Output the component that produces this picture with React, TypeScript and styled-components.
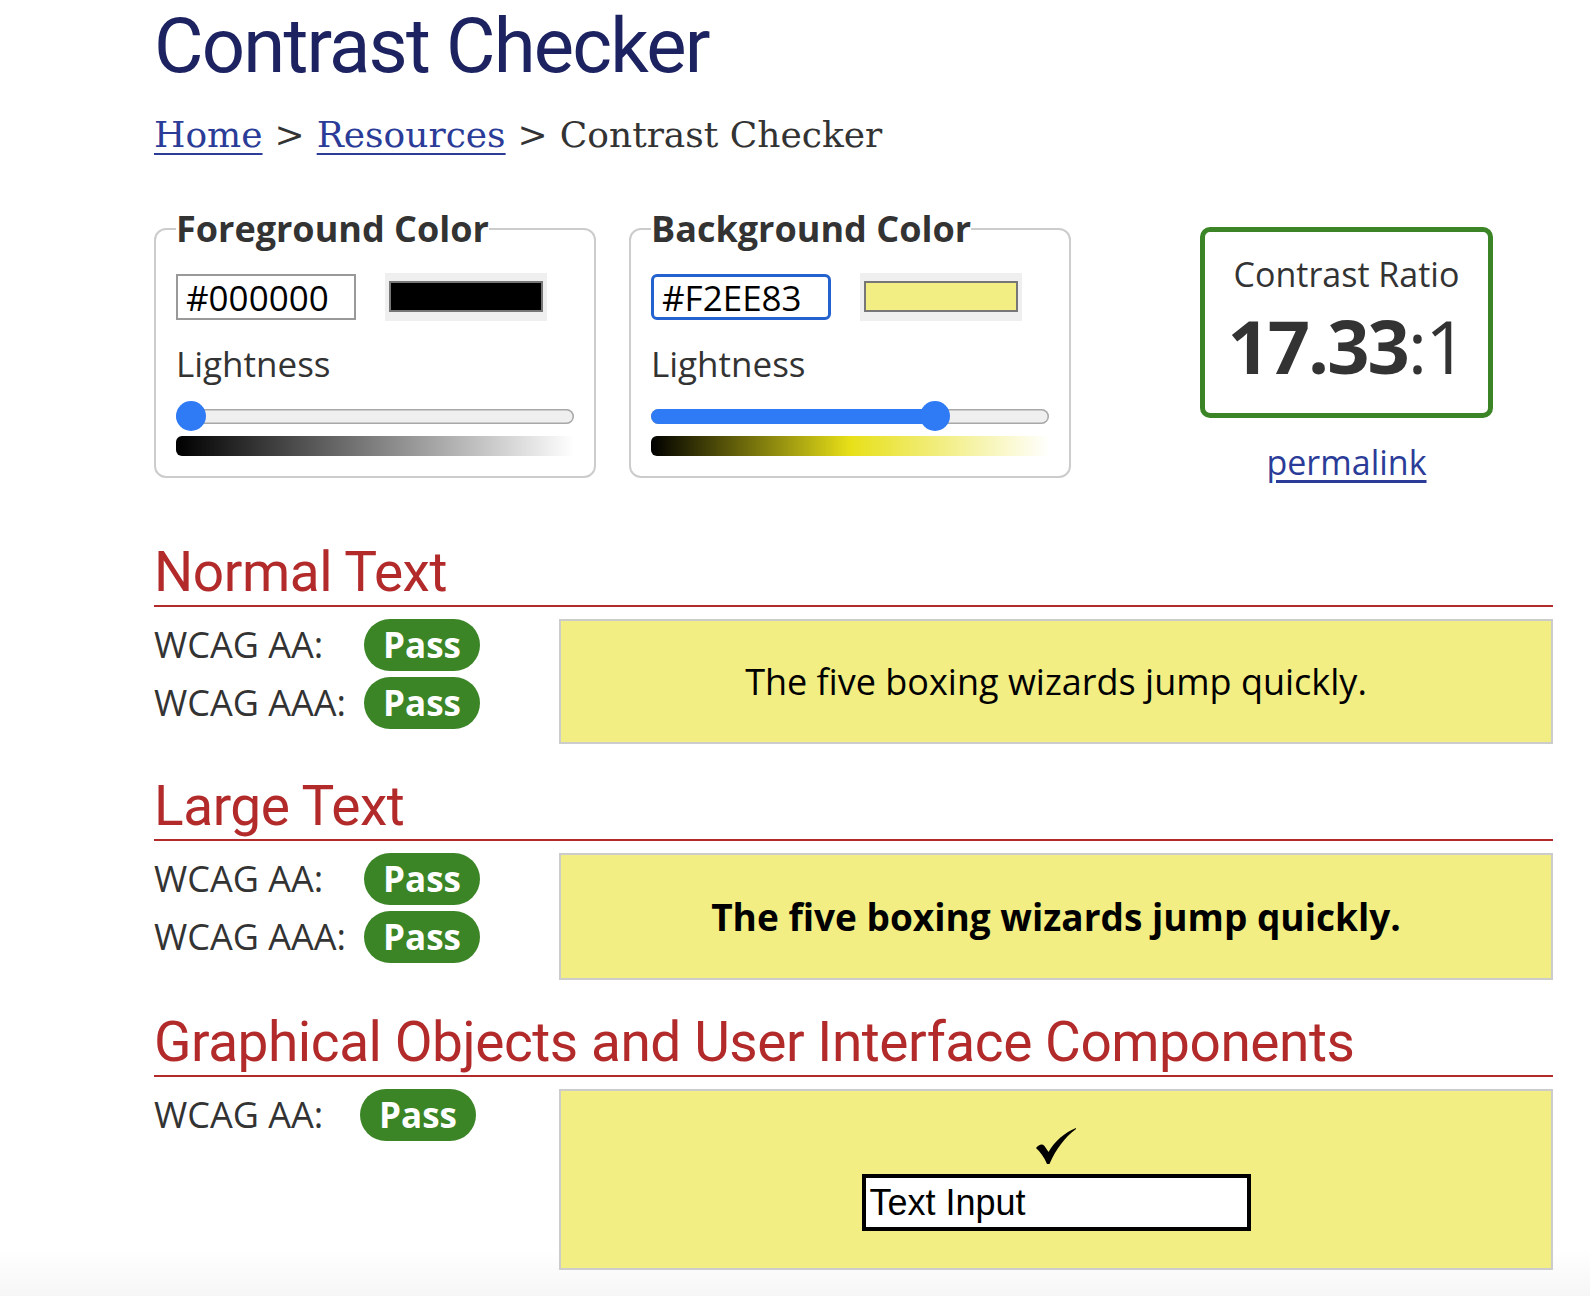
import styled, { createGlobalStyle } from "styled-components";

const GlobalStyle = createGlobalStyle`
  html, body {
    margin: 0;
    padding: 0;
  }
  body {
    min-height: 1296px;
    background: linear-gradient(to bottom, #ffffff 1250px, #f6f6f6 1296px);
    font-family: "Open Sans", "Liberation Sans", sans-serif;
    color: #333;
  }
`;

const colors = {
  navy: "#1c2360",
  link: "#2b3c98",
  red: "#b22a2a",
  green: "#3b8527",
  blue: "#2f7af5",
  sample: "#F2EE83",
  border: "#cccccc",
};

const Page = styled.main`
  width: 1399px;
  padding-left: 154px;
`;

const Title = styled.h1`
  margin: 0;
  padding-top: 8px;
  font-family: Roboto, "Liberation Sans", sans-serif;
  font-weight: 400;
  font-size: 76px;
  line-height: 1;
  letter-spacing: -1.8px;
  color: ${colors.navy};
`;

const Breadcrumb = styled.nav`
  margin-top: 33px;
  font-family: "DejaVu Serif", "Liberation Serif", serif;
  font-size: 36px;
  line-height: 1;
  color: #333;

  a {
    color: ${colors.link};
    text-decoration: underline;
    text-underline-offset: 6px;
    text-decoration-thickness: 2px;
  }
`;

const Sep = styled.span`
  margin: 0 12px;
`;

const TopRow = styled.div`
  display: flex;
  align-items: flex-start;
  margin-top: 54px;
`;

const PickerBox = styled.fieldset`
  box-sizing: border-box;
  width: 442px;
  margin: 0 33px 0 0;
  padding: 22px 20px 20px;
  border: 2px solid ${colors.border};
  border-radius: 12px;
  min-inline-size: auto;
`;

const Legend = styled.legend`
  padding: 0;
  font-weight: 700;
  font-size: 36px;
  line-height: 44px;
  color: #333;
`;

const InputRow = styled.div`
  display: flex;
  align-items: center;
  gap: 29px;
`;

const HexInput = styled.div<{ $focused?: boolean }>`
  box-sizing: border-box;
  width: 180px;
  height: 46px;
  padding: 0 8px;
  display: flex;
  align-items: center;
  font-size: 35px;
  color: #000;
  background: #fff;
  border: ${(p) => (p.$focused ? "3px solid #2462d0" : "2px solid #999")};
  border-radius: ${(p) => (p.$focused ? "6px" : "0")};
`;

const Swatch = styled.div`
  box-sizing: border-box;
  width: 162px;
  height: 48px;
  padding: 8px 4px 9px;
  background: #efefef;
`;

const SwatchColor = styled.div<{ $color: string }>`
  height: 100%;
  box-sizing: border-box;
  border: 2px solid #777;
  background: ${(p) => p.$color};
`;

const FieldLabel = styled.div`
  margin-top: 22px;
  font-size: 35px;
  line-height: 42px;
  color: #333;
`;

const SliderWrap = styled.div`
  position: relative;
  height: 30px;
  margin-top: 16px;
  display: flex;
  align-items: center;
`;

const Rail = styled.div`
  flex: 1;
  height: 15px;
  border-radius: 8px;
  background: #efefef;
  box-shadow: inset 0 0 0 1.5px #a8a8a8;
  overflow: hidden;
`;

const RailFill = styled.div`
  height: 100%;
  background: ${colors.blue};
`;

const Thumb = styled.div`
  position: absolute;
  top: 0;
  width: 30px;
  height: 30px;
  border-radius: 50%;
  background: ${colors.blue};
`;

const GradientBar = styled.div<{ $gradient: string }>`
  height: 20px;
  margin-top: 5px;
  border-radius: 6px 0 0 6px;
  background: ${(p) => p.$gradient};
`;

const RatioColumn = styled.div`
  margin-left: 96px;
  margin-top: 20px;
  display: flex;
  flex-direction: column;
  align-items: center;
`;

const RatioBox = styled.div`
  box-sizing: border-box;
  width: 293px;
  height: 191px;
  padding-top: 22px;
  border: 5px solid ${colors.green};
  border-radius: 10px;
  text-align: center;
`;

const RatioLabel = styled.div`
  font-size: 34px;
  line-height: 40px;
  color: #333;
`;

const RatioValue = styled.div`
  margin-top: 15px;
  font-size: 74px;
  line-height: 1;
  letter-spacing: -2px;
  color: #333;

  b {
    font-weight: 700;
  }
`;

const Permalink = styled.a`
  margin-top: 24px;
  font-size: 34px;
  line-height: 40px;
  color: ${colors.link};
  text-decoration: underline;
  text-underline-offset: 5px;
`;

const Section = styled.section<{ $first?: boolean }>`
  margin-top: ${(p) => (p.$first ? "60px" : "32px")};
`;

const SectionTitle = styled.h2`
  margin: 0;
  padding-bottom: 3px;
  border-bottom: 2px solid ${colors.red};
  font-family: Roboto, "Liberation Sans", sans-serif;
  font-weight: 400;
  font-size: 55px;
  line-height: 60px;
  letter-spacing: -0.45px;
  color: ${colors.red};
`;

const SectionBody = styled.div`
  display: flex;
  align-items: flex-start;
  margin-top: 12px;
`;

const Results = styled.div<{ $labelWidth: number }>`
  width: 405px;
  display: grid;
  grid-template-columns: ${(p) => p.$labelWidth}px auto;
  justify-content: start;
  row-gap: 6px;
`;

const ResultLabel = styled.div`
  font-size: 36px;
  line-height: 52px;
  color: #333;
  white-space: nowrap;
`;

const Pass = styled.div`
  box-sizing: border-box;
  width: 116px;
  height: 52px;
  border-radius: 26px;
  background: ${colors.green};
  color: #fff;
  font-weight: 700;
  font-size: 35px;
  line-height: 52px;
  text-align: center;
`;

const Sample = styled.div<{ $bold?: boolean; $tall?: boolean }>`
  box-sizing: border-box;
  width: 994px;
  padding: ${(p) => (p.$tall ? "37px 0" : "36px 0")};
  display: flex;
  flex-direction: column;
  align-items: center;
  background: ${colors.sample};
  border: 2px solid ${colors.border};
  color: #000;
  font-size: ${(p) => (p.$bold ? "37px" : "36px")};
  font-weight: ${(p) => (p.$bold ? 700 : 400)};
`;

const Check = styled.svg`
  display: block;
  width: 40px;
  height: 36px;
`;

const DemoInput = styled.div`
  box-sizing: border-box;
  width: 389px;
  height: 57px;
  margin-top: 10px;
  padding: 0 4px;
  display: flex;
  align-items: center;
  background: #fff;
  border: 4px solid #000;
  font-family: "Liberation Sans", Arial, sans-serif;
  font-size: 36px;
  color: #000;
`;

type SliderProps = { value: number; filled?: boolean };

const Slider = ({ value, filled }: SliderProps) => (
  <SliderWrap>
    <Rail>
      {filled && <RailFill style={{ width: `calc(15px + (100% - 30px) * ${value})` }} />}
    </Rail>
    <Thumb style={{ left: `calc((100% - 30px) * ${value})` }} />
  </SliderWrap>
);

type PickerProps = {
  legend: string;
  hex: string;
  focused?: boolean;
  lightness: number;
  filled?: boolean;
  gradient: string;
};

const Picker = ({ legend, hex, focused, lightness, filled, gradient }: PickerProps) => (
  <PickerBox>
    <Legend>{legend}</Legend>
    <InputRow>
      <HexInput $focused={focused}>{hex}</HexInput>
      <Swatch>
        <SwatchColor $color={hex} />
      </Swatch>
    </InputRow>
    <FieldLabel>Lightness</FieldLabel>
    <Slider value={lightness} filled={filled} />
    <GradientBar $gradient={gradient} />
  </PickerBox>
);

const ResultList = ({ rows, labelWidth }: { rows: string[]; labelWidth: number }) => (
  <Results $labelWidth={labelWidth}>
    {rows.flatMap((label) => [
      <ResultLabel key={label}>{label}</ResultLabel>,
      <Pass key={label + "-pass"}>Pass</Pass>,
    ])}
  </Results>
);

const both = ["WCAG AA:", "WCAG AAA:"];
const sentence = "The five boxing wizards jump quickly.";

const App = () => {
  return (
    <>
      <GlobalStyle />
      <Page>
        <Title>Contrast Checker</Title>
        <Breadcrumb>
          <a href="#">Home</a>
          <Sep>&gt;</Sep>
          <a href="#">Resources</a>
          <Sep>&gt;</Sep>
          Contrast Checker
        </Breadcrumb>

        <TopRow>
          <Picker
            legend="Foreground Color"
            hex="#000000"
            lightness={0}
            gradient="linear-gradient(to right, #000, #fff)"
          />
          <Picker
            legend="Background Color"
            hex="#F2EE83"
            focused
            lightness={0.731}
            filled
            gradient="linear-gradient(to right, hsl(58, 81%, 0%), hsl(58, 81%, 50%) 50%, hsl(58, 81%, 100%))"
          />
          <RatioColumn>
            <RatioBox>
              <RatioLabel>Contrast Ratio</RatioLabel>
              <RatioValue>
                <b>17.33</b>:1
              </RatioValue>
            </RatioBox>
            <Permalink href="#">permalink</Permalink>
          </RatioColumn>
        </TopRow>

        <Section $first>
          <SectionTitle>Normal Text</SectionTitle>
          <SectionBody>
            <ResultList rows={both} labelWidth={210} />
            <Sample>{sentence}</Sample>
          </SectionBody>
        </Section>

        <Section>
          <SectionTitle>Large Text</SectionTitle>
          <SectionBody>
            <ResultList rows={both} labelWidth={210} />
            <Sample $bold>{sentence}</Sample>
          </SectionBody>
        </Section>

        <Section>
          <SectionTitle>Graphical Objects and User Interface Components</SectionTitle>
          <SectionBody>
            <ResultList rows={["WCAG AA:"]} labelWidth={206} />
            <Sample $tall>
              <Check viewBox="0 0 40 36">
                <path
                  d="M0 20 C3 16.5 6 15.5 8.5 18 L12.5 24 C19 13 28 5 40 0 L40 1 C29 9 20 21 13.5 36 L11 36 C8 29 4.5 24 0 20 Z"
                  fill="#000"
                />
              </Check>
              <DemoInput>Text Input</DemoInput>
            </Sample>
          </SectionBody>
        </Section>
      </Page>
    </>
  );
};

export default App;
